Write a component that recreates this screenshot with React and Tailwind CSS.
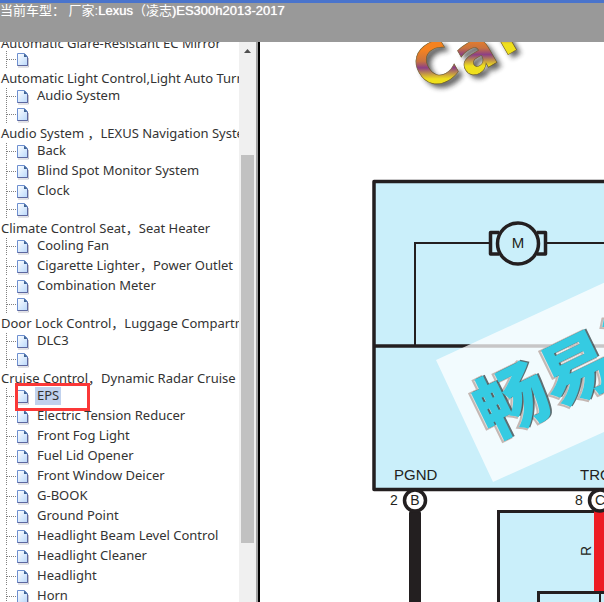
import React from 'react';
import clsx from 'clsx';

// An empty string is a page node without a title.
const GROUPS = [
  { title: 'Automatic Glare-Resistant EC Mirror', items: [''] },
  { title: 'Automatic Light Control,Light Auto Turn Off', items: ['Audio System', ''] },
  { title: 'Audio System ，LEXUS Navigation System', items: ['Back', 'Blind Spot Monitor System', 'Clock', ''] },
  { title: 'Climate Control Seat，Seat Heater', items: ['Cooling Fan', 'Cigarette Lighter，Power Outlet', 'Combination Meter', ''] },
  { title: 'Door Lock Control，Luggage Compartment', items: ['DLC3', ''] },
  {
    title: 'Cruise Control，Dynamic Radar Cruise Control',
    items: [
      'EPS',
      'Electric Tension Reducer',
      'Front Fog Light',
      'Fuel Lid Opener',
      'Front Window Deicer',
      'G-BOOK',
      'Ground Point',
      'Headlight Beam Level Control',
      'Headlight Cleaner',
      'Headlight',
      'Horn',
    ],
  },
];

const BRAND = [
  { letter: 'C', x: 427, y: 92 },
  { letter: 'a', x: 468, y: 79 },
  { letter: 'r', x: 504, y: 57 },
];

/** Dotted branch plus the page icon in front of every node. */
function Branch() {
  return (
    <svg width="32" height="18" viewBox="0 0 32 18" className="shrink-0" aria-hidden="true">
      <path d="M6.5 0V18" stroke="#808080" strokeDasharray="1 1" />
      <path d="M7 8.5H17" stroke="#808080" strokeDasharray="1 1" />
      <path d="M18 16H28.500V7" fill="none" stroke="#8c8c9c" strokeOpacity="0.5" />
      <path d="M17.5 2.5H24.5L27.5 5.5V14.5H17.5Z" fill="url(#page)" stroke="#6d8fd0" />
      <path d="M17.5 14.5H27.5V6" fill="none" stroke="#5d679f" />
      <path d="M24 2.5V6H27.5Z" fill="#3f6396" />
    </svg>
  );
}

function TreeItem({ label, selected, onSelect }) {
  return (
    <li className={clsx('relative flex items-start', label ? 'h-5' : '-mt-[2px] h-[17px]')}>
      <Branch />
      {label && (
        <a
          href="#diagram"
          onClick={onSelect}
          className={clsx('-mt-px ml-[3px] h-[18px] px-[2px] leading-4 whitespace-nowrap', selected && 'bg-[#c1d2ee]')}
        >
          {label}
        </a>
      )}
      {selected && <span className="absolute -top-[5px] left-[15px] z-10 h-7 w-[75px] border-3 border-[#fb3838]" />}
    </li>
  );
}

function Sidebar() {
  const [current, setCurrent] = React.useState('EPS');
  return (
    <aside className="flex w-[260px] shrink-0 border-r-2 border-black">
      <nav className="min-w-0 flex-1 overflow-hidden font-['Noto_Sans','Noto_Sans_CJK_SC',sans-serif] text-[13px] text-[#333]">
        <div className="-mt-[9px]">
          {GROUPS.map((group) => (
            <section key={group.title}>
              <h2 className="h-5 pl-px leading-5 whitespace-nowrap">{group.title}</h2>
              <ul>
                {group.items.map((label, i) => (
                  <TreeItem key={i} label={label} selected={label === current} onSelect={() => setCurrent(label)} />
                ))}
              </ul>
            </section>
          ))}
        </div>
      </nav>
      {/* Scrollbar */}
      <div className="flex w-[17px] flex-col items-center bg-[#f0f0f0]">
        <svg width="17" height="17" viewBox="0 0 17 17" className="shrink-0" aria-hidden="true">
          <path d="M5 11L8.5 7L12 11Z" fill="#505050" />
        </svg>
        <div className="mt-24 h-[388px] w-[13px] shrink-0 bg-[#c1c1c1]" />
      </div>
      <div className="w-[2px] bg-[#a0a0a0]" />
    </aside>
  );
}

function Diagram() {
  return (
    <svg
      id="diagram"
      width="500"
      height="640"
      viewBox="260 42 500 640"
      fontFamily="Liberation Sans, Arial, sans-serif"
      fontSize="15"
      fill="#231f20"
    >
      <defs>
        <linearGradient id="page" x1="0" y1="0" x2="1" y2="1">
          <stop offset="0" stopColor="#fff" />
          <stop offset="1" stopColor="#b9d8fb" />
        </linearGradient>
        <linearGradient id="rainbow" gradientUnits="userSpaceOnUse" x1="32" y1="-38" x2="10" y2="1">
          <stop offset="0.15" stopColor="#f58220" />
          <stop offset="0.4" stopColor="#c9733f" />
          <stop offset="0.55" stopColor="#8c3f86" />
          <stop offset="0.7" stopColor="#c9a040" />
          <stop offset="0.8" stopColor="#efe01c" />
        </linearGradient>
        <filter id="soft" x="-20%" y="-20%" width="150%" height="150%">
          <feGaussianBlur stdDeviation="2.5" />
        </filter>
      </defs>

      {/* Brand mark */}
      <g fontFamily="DejaVu Sans, sans-serif" fontSize="56" fontWeight="700">
        {BRAND.map(({ letter, x, y }) => (
          <g key={letter} transform={`translate(${x} ${y}) rotate(-30)`}>
            <text x="2" y="5" fill="#222" opacity="0.7" filter="url(#soft)">{letter}</text>
            <text fill="url(#rainbow)" stroke="#6b5a2a" strokeWidth="0.6">{letter}</text>
          </g>
        ))}
      </g>

      {/* Control unit */}
      <g fill="none" stroke="#231f20">
        <rect x="374" y="181.5" width="400" height="308" fill="#caeffa" strokeWidth="3.500" strokeLinejoin="round" />
        <path d="M374 346H760" strokeWidth="3.500" />
        <path d="M415 346V243H490M546 243H760" strokeWidth="2" />
        <path d="M499 232.500H490.500V254H499M537 232.500H545.500V254H537" strokeWidth="3.500" strokeLinejoin="round" />
        <circle cx="518" cy="243.500" r="20.500" fill="#caeffa" strokeWidth="3.500" />
      </g>
      <text x="518" y="248" textAnchor="middle">M</text>

      {/* Watermark */}
      <path d="M436 360L760 211V362L493 482Z" fill="#fff" fillOpacity="0.75" />
      <g
        transform="translate(512 401) rotate(-26)"
        fontFamily="Noto Sans CJK SC, sans-serif"
        fontSize="72"
        fontWeight="900"
      >
        <text x="-38" y="26" fill="#e6dedb" stroke="#c4b8b4" strokeWidth="2">畅易汽车</text>
        <text x="-34" y="26" fill="#3b4c50" opacity="0.8">畅易汽车</text>
        <text x="-36" y="26" fill="#35cbe2">畅易汽车</text>
      </g>

      {/* Terminals and wires */}
      <text x="394" y="480">PGND</text>
      <text x="580" y="480">TRQ1</text>
      <path d="M498.500 640V511.500H760V640Z" fill="#caeffa" stroke="#231f20" strokeWidth="3" />
      <rect x="409" y="511" width="12" height="180" rx="2" />
      <rect x="594" y="511" width="12" height="80" fill="#ed1c24" />
      <path d="M538.500 640V592.500H760" fill="none" stroke="#231f20" strokeWidth="3" />
      <path d="M600 593V640" stroke="#231f20" strokeWidth="2" />
      <g fill="#fff" stroke="#231f20" strokeWidth="3.500">
        <circle cx="415" cy="500.500" r="10.500" />
        <circle cx="600" cy="500.500" r="10.500" />
      </g>
      <g fontSize="14">
        <text x="390" y="505">2</text>
        <text x="415" y="505" textAnchor="middle">B</text>
        <text x="575" y="505">8</text>
        <text x="600" y="505" textAnchor="middle">C</text>
        <text transform="translate(591 556) rotate(-90)">R</text>
      </g>
    </svg>
  );
}

export default function App() {
  return (
    <div className="flex h-screen flex-col overflow-hidden bg-white">
      <header className="h-[42px] shrink-0 border-t-3 border-[#4a74cc] bg-[#999]">
        <h1 className="font-['Liberation_Sans','Noto_Sans_CJK_SC',sans-serif] text-[13px] leading-4 whitespace-nowrap text-white">
          当前车型： 厂家:<span className="[text-shadow:0_0_1px_#fff]">Lexus</span>（凌志
          <span className="[text-shadow:0_0_1px_#fff]">)ES300h2013-2017</span>
        </h1>
      </header>
      <div className="flex min-h-0 flex-1">
        <Sidebar />
        <main className="min-w-0 flex-1 overflow-hidden">
          <Diagram />
        </main>
      </div>
    </div>
  );
}
